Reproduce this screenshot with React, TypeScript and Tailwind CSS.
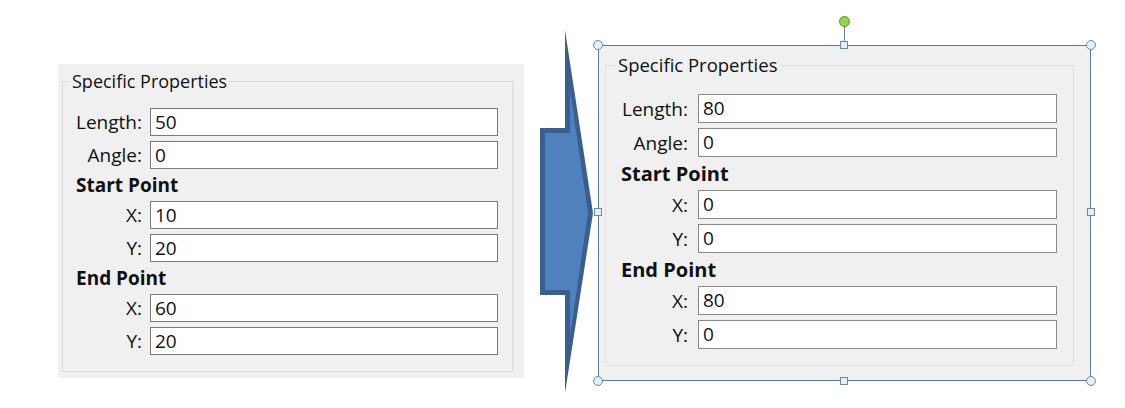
import React from "react";

type Row = { kind: "field"; label: string; value: string } | { kind: "head"; text: string };

const leftRows: Row[] = [
  { kind: "field", label: "Length:", value: "50" },
  { kind: "field", label: "Angle:", value: "0" },
  { kind: "head", text: "Start Point" },
  { kind: "field", label: "X:", value: "10" },
  { kind: "field", label: "Y:", value: "20" },
  { kind: "head", text: "End Point" },
  { kind: "field", label: "X:", value: "60" },
  { kind: "field", label: "Y:", value: "20" },
];

const rightRows: Row[] = [
  { kind: "field", label: "Length:", value: "80" },
  { kind: "field", label: "Angle:", value: "0" },
  { kind: "head", text: "Start Point" },
  { kind: "field", label: "X:", value: "0" },
  { kind: "field", label: "Y:", value: "0" },
  { kind: "head", text: "End Point" },
  { kind: "field", label: "X:", value: "80" },
  { kind: "field", label: "Y:", value: "0" },
];

function LeftPanel() {
  return (
    <div className="ml-[58px] mt-[64px] flex h-[314px] w-[466px] flex-col bg-[#f0f0f0] pb-[6px] pl-[4px] pr-[11px] pt-[6px]">
      <fieldset className="flex-1 border border-[#dadada]">
        <legend className="ml-[7px] px-[2px] text-[18px] leading-[22px] text-[#111]">Specific Properties</legend>
        <div className="flex flex-col gap-[5px] pt-[16px]">
          {leftRows.map((r, i) =>
            r.kind === "head" ? (
              <div key={i} className="h-[22px] pl-[13px] text-[19px] font-bold leading-[22px] text-[#111]">
                {r.text}
              </div>
            ) : (
              <div key={i} className="flex items-center">
                <div className="w-[79px] text-right text-[19px] leading-[22px] text-[#111]">{r.label}</div>
                <div className="ml-[8px] flex h-[28px] w-[348px] items-center border border-[#7a7a7a] bg-white pl-[4px] text-[19px] text-[#111]">
                  {r.value}
                </div>
              </div>
            )
          )}
        </div>
      </fieldset>
    </div>
  );
}

function Arrow() {
  return (
    <svg className="ml-[12px] mt-[27px] shrink-0" width="60" height="370" viewBox="536 27 60 370">
      <polygon points="540,128 565,128 565,30 593,213 565,393 565,295 540,295" fill="#3a5f8f" />
      <polygon points="545,133 570,133 570,90 588,213 570,336 570,290 545,290" fill="#4f81bd" />
    </svg>
  );
}

function Handle({ cls, round }: { cls: string; round?: boolean }) {
  return (
    <div
      className={
        "absolute border border-[#6a89a8] bg-[#e3eef8] " +
        (round ? "h-[10px] w-[10px] rounded-full " : "h-[8px] w-[8px] ") +
        cls
      }
    />
  );
}

function RightPanel() {
  return (
    <div className="relative ml-[2px] mt-[45px] flex h-[336px] w-[493px] shrink-0 flex-col border border-[#5b7a99] bg-[#f0f0f0] pb-[14px] pl-[6px] pr-[16px] pt-[8px]">
      <fieldset className="flex-1 border border-[#e0e0e0]">
        <legend className="ml-[10px] px-[2px] text-[18.5px] leading-[22px] text-[#111]">Specific Properties</legend>
        <div className="flex flex-col gap-[5px] pt-[18px]">
          {rightRows.map((r, i) =>
            r.kind === "head" ? (
              <div key={i} className="h-[23px] pl-[15px] text-[20px] font-bold leading-[23px] text-[#111]">
                {r.text}
              </div>
            ) : (
              <div key={i} className="flex items-center">
                <div className="w-[82px] text-right text-[19px] leading-[22px] text-[#111]">{r.label}</div>
                <div className="ml-[10px] flex h-[29px] w-[359px] items-center border border-[#888] bg-white pl-[4px] text-[19px] text-[#111]">
                  {r.value}
                </div>
              </div>
            )
          )}
        </div>
      </fieldset>
      {/* selection handles */}
      <Handle round cls="-left-[6px] -top-[6px]" />
      <Handle round cls="-right-[6px] -top-[6px]" />
      <Handle round cls="-bottom-[6px] -left-[6px]" />
      <Handle round cls="-bottom-[6px] -right-[6px]" />
      <Handle cls="-top-[5px] left-[241px]" />
      <Handle cls="-bottom-[5px] left-[241px]" />
      <Handle cls="-left-[5px] top-[162px]" />
      <Handle cls="-right-[5px] top-[162px]" />
      {/* rotation handle */}
      <div className="absolute -top-[20px] left-[245px] h-[15px] w-px bg-[#6f7f8f]" />
      <div className="absolute -top-[30px] left-[240px] h-[11px] w-[11px] rounded-full border border-[#5f9a2a] bg-[#8fd44f]" />
    </div>
  );
}

export default function App() {
  return (
    <div className="flex h-[408px] w-[1125px] items-start overflow-hidden bg-white font-['Open_Sans',sans-serif]">
      <LeftPanel />
      <Arrow />
      <RightPanel />
    </div>
  );
}
